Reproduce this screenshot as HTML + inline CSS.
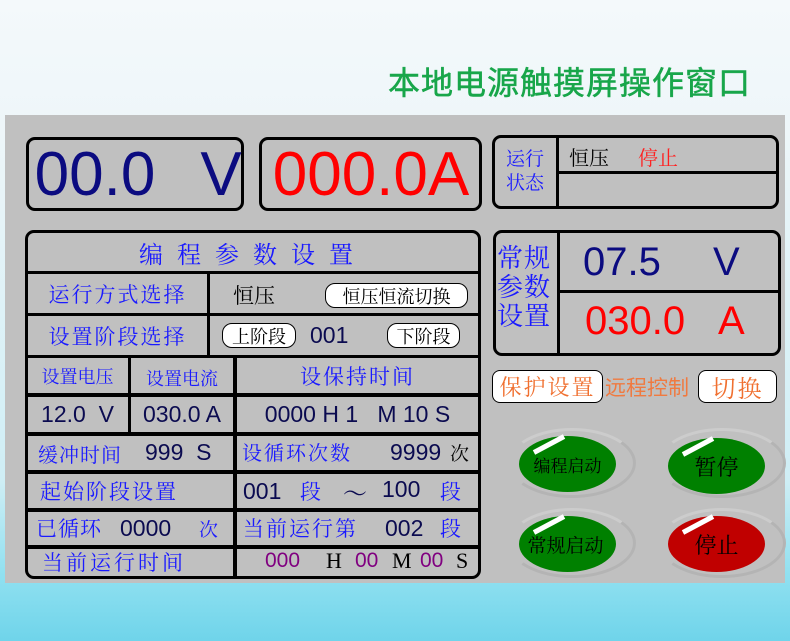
<!DOCTYPE html>
<html><head><meta charset="utf-8"><style>
*{margin:0;padding:0;box-sizing:border-box}
body{width:790px;height:641px;overflow:hidden;position:relative;font-family:"Liberation Sans","Noto Sans CJK SC",sans-serif;
background:linear-gradient(180deg,#f4f9fb 0%,#eef6f9 20%,#cfeef5 75%,#8fe0f0 90%,#6fd4ea 100%)}
.a{position:absolute}
.panel{left:5px;top:115px;width:780px;height:468px;background:#c0c0c0}
.box{position:absolute;border:3px solid #000;border-radius:9px}
.c{position:absolute;display:flex;align-items:center;justify-content:center;white-space:nowrap}
.s{font-family:"Liberation Serif","Noto Serif CJK SC",serif}
.blue{color:#1a1aff}
.ln{position:absolute;background:#000}
.btn{position:absolute;background:#fff;border:1px solid #000;border-radius:8px;display:flex;align-items:center;justify-content:center;white-space:nowrap}
.rb{position:absolute;border-radius:50%}
</style></head><body>
<div class="a" style="left:388px;top:58px;font-size:32px;color:#18a64a;font-family:'Noto Sans CJK SC',sans-serif;letter-spacing:1px;-webkit-text-stroke:0.5px #18a64a">本地电源触摸屏操作窗口</div>
<div class="a panel"></div>

<div class="box" style="left:26px;top:137px;width:218px;height:74px"></div>
<div class="c" style="left:30px;top:137px;width:130px;height:74px;font-size:62px;color:#0b0b80">00.0</div>
<div class="c" style="left:196px;top:137px;width:50px;height:74px;font-size:62px;color:#0b0b80">V</div>
<div class="box" style="left:259px;top:137px;width:223px;height:74px"></div>
<div class="c" style="left:262px;top:137px;width:218px;height:74px;font-size:62px;color:#ff0000">000.0A</div>

<div class="box" style="left:492px;top:135px;width:287px;height:74px"></div>
<div class="ln" style="left:556px;top:137px;width:3px;height:70px"></div>
<div class="ln" style="left:558px;top:171px;width:219px;height:3px"></div>
<div class="c s blue" style="left:495px;top:140px;width:60px;height:64px;font-size:19px;line-height:24px;white-space:normal;text-align:center">运行<br>状态</div>
<div class="a s" style="left:569px;top:142px;font-size:20px;color:#000">恒压</div>
<div class="a s" style="left:638px;top:142px;font-size:20px;color:#ff2020">停止</div>

<div class="box" style="left:493px;top:230px;width:288px;height:126px"></div>
<div class="ln" style="left:557px;top:232px;width:3px;height:122px"></div>
<div class="ln" style="left:559px;top:290px;width:220px;height:3px"></div>
<div class="a s blue" style="left:497px;top:244px;font-size:26px;line-height:29px;width:60px;letter-spacing:1px">常规参数设置</div>
<div class="a" style="left:583px;top:240px;font-size:40px;color:#0b0b80">07.5</div>
<div class="a" style="left:713px;top:240px;font-size:40px;color:#0b0b80">V</div>
<div class="a" style="left:585px;top:299px;font-size:40px;color:#ff0000">030.0</div>
<div class="a" style="left:718px;top:299px;font-size:40px;color:#ff0000">A</div>

<div class="btn s" style="left:492px;top:370px;width:111px;height:33px;font-size:22px;color:#f07030;letter-spacing:2px">保护设置</div>
<div class="a" style="left:605px;top:372px;font-size:21px;color:#f07a40;font-family:'Noto Sans CJK SC',sans-serif">远程控制</div>
<div class="btn s" style="left:698px;top:370px;width:79px;height:33px;font-size:24px;color:#f07030;letter-spacing:2px">切换</div>

<div class="rb" style="left:508px;top:428px;width:128px;height:70px;border:3px solid #b4b4b4;border-left-color:transparent;border-top-color:#ccc"></div>
<div class="rb" style="left:519px;top:436px;width:97px;height:56px;background:#008000"></div>
<div class="a" style="left:532px;top:442px;width:34px;height:5px;background:#fff;transform:rotate(-28deg)"></div>
<div class="c s" style="left:519px;top:436px;width:97px;height:56px;font-size:17px">编程启动</div>

<div class="rb" style="left:658px;top:428px;width:128px;height:70px;border:3px solid #b4b4b4;border-left-color:transparent;border-top-color:#ccc"></div>
<div class="rb" style="left:668px;top:438px;width:97px;height:56px;background:#008000"></div>
<div class="a" style="left:681px;top:444px;width:34px;height:5px;background:#fff;transform:rotate(-28deg)"></div>
<div class="c s" style="left:668px;top:438px;width:97px;height:56px;font-size:22px">暂停</div>

<div class="rb" style="left:508px;top:508px;width:128px;height:70px;border:3px solid #b4b4b4;border-left-color:transparent;border-top-color:#ccc"></div>
<div class="rb" style="left:519px;top:516px;width:97px;height:56px;background:#008000"></div>
<div class="a" style="left:532px;top:522px;width:34px;height:5px;background:#fff;transform:rotate(-28deg)"></div>
<div class="c s" style="left:517px;top:516px;width:97px;height:56px;font-size:19px">常规启动</div>

<div class="rb" style="left:658px;top:508px;width:128px;height:70px;border:3px solid #b4b4b4;border-left-color:transparent;border-top-color:#ccc"></div>
<div class="rb" style="left:668px;top:516px;width:97px;height:56px;background:#c00000"></div>
<div class="a" style="left:681px;top:522px;width:34px;height:5px;background:#fff;transform:rotate(-28deg)"></div>
<div class="c s" style="left:668px;top:516px;width:97px;height:56px;font-size:22px">停止</div>

<div class="box" style="left:25px;top:230px;width:456px;height:349px;border-width:3px"></div>
<div class="c s blue" style="left:28px;top:232px;width:450px;height:40px;font-size:24px;letter-spacing:14px">编程参数设置</div>
<div class="ln" style="left:27px;top:271px;width:452px;height:3px"></div>
<div class="ln" style="left:207px;top:273px;width:3px;height:42px"></div>
<div class="c s blue" style="left:28px;top:274px;width:179px;height:39px;font-size:21px;letter-spacing:2px">运行方式选择</div>
<div class="a s" style="left:233px;top:280px;font-size:21px">恒压</div>
<div class="btn s" style="left:325px;top:283px;width:143px;height:25px;border-radius:10px;font-size:18px">恒压恒流切换</div>
<div class="ln" style="left:27px;top:313px;width:452px;height:3px"></div>
<div class="ln" style="left:207px;top:315px;width:3px;height:42px"></div>
<div class="c s blue" style="left:28px;top:316px;width:179px;height:39px;font-size:21px;letter-spacing:2px">设置阶段选择</div>
<div class="btn s" style="left:222px;top:323px;width:74px;height:25px;border-radius:10px;font-size:18px">上阶段</div>
<div class="a" style="left:310px;top:322px;font-size:23px;color:#0b0b50">001</div>
<div class="btn s" style="left:387px;top:323px;width:73px;height:25px;border-radius:10px;font-size:18px">下阶段</div>
<div class="ln" style="left:27px;top:355px;width:452px;height:3px"></div>

<div class="ln" style="left:128px;top:357px;width:3px;height:77px"></div>
<div class="ln" style="left:233px;top:357px;width:4px;height:220px"></div>
<div class="ln" style="left:27px;top:393px;width:452px;height:4px"></div>
<div class="ln" style="left:27px;top:432px;width:452px;height:4px"></div>
<div class="ln" style="left:27px;top:470px;width:452px;height:4px"></div>
<div class="ln" style="left:27px;top:508px;width:452px;height:4px"></div>
<div class="ln" style="left:27px;top:545px;width:452px;height:4px"></div>

<div class="c s blue" style="left:27px;top:358px;width:101px;height:35px;font-size:18px">设置电压</div>
<div class="c s blue" style="left:131px;top:360px;width:102px;height:35px;font-size:18px">设置电流</div>
<div class="c s blue" style="left:237px;top:358px;width:241px;height:35px;font-size:21px;letter-spacing:2px">设保持时间</div>
<div class="c" style="left:27px;top:397px;width:101px;height:35px;font-size:23px;color:#0b0b50">12.0&nbsp;&nbsp;V</div>
<div class="c" style="left:131px;top:397px;width:102px;height:35px;font-size:23px;color:#0b0b50">030.0 A</div>
<div class="c" style="left:237px;top:397px;width:241px;height:35px;font-size:23px;color:#0b0b50">0000 H 1&nbsp;&nbsp;&nbsp;M 10 S</div>

<div class="a s blue" style="left:38px;top:439px;font-size:20px;letter-spacing:1px">缓冲时间</div>
<div class="a" style="left:145px;top:439px;font-size:23px;color:#0b0b50">999&nbsp;&nbsp;S</div>
<div class="a s blue" style="left:242px;top:437px;font-size:20px;letter-spacing:2px">设循环次数</div>
<div class="a" style="left:390px;top:439px;font-size:23px;color:#0b0b50">9999</div>
<div class="a s" style="left:450px;top:439px;font-size:19px">次</div>

<div class="a s blue" style="left:40px;top:476px;font-size:21px;letter-spacing:2px">起始阶段设置</div>
<div class="a" style="left:243px;top:478px;font-size:23px;color:#0b0b50">001</div>
<div class="a s blue" style="left:300px;top:476px;font-size:21px">段</div>
<div class="a s" style="left:343px;top:474px;font-size:24px;color:#0b0b50">～</div>
<div class="a" style="left:382px;top:476px;font-size:23px;color:#0b0b50">100</div>
<div class="a s blue" style="left:440px;top:476px;font-size:21px">段</div>

<div class="a s blue" style="left:36px;top:513px;font-size:21px;letter-spacing:1px">已循环</div>
<div class="a" style="left:120px;top:515px;font-size:23px;color:#0b0b50">0000</div>
<div class="a s blue" style="left:199px;top:515px;font-size:19px">次</div>
<div class="a s blue" style="left:243px;top:513px;font-size:21px;letter-spacing:2px">当前运行第</div>
<div class="a" style="left:385px;top:515px;font-size:23px;color:#0b0b50">002</div>
<div class="a s blue" style="left:440px;top:513px;font-size:21px">段</div>

<div class="a s blue" style="left:42px;top:547px;font-size:21px;letter-spacing:3px">当前运行时间</div>
<div class="a" style="left:265px;top:549px;font-size:21px;color:#800080">000</div>
<div class="a s" style="left:326px;top:548px;font-size:22px">H</div>
<div class="a" style="left:355px;top:549px;font-size:21px;color:#800080">00</div>
<div class="a s" style="left:392px;top:548px;font-size:22px">M</div>
<div class="a" style="left:420px;top:549px;font-size:21px;color:#800080">00</div>
<div class="a s" style="left:456px;top:548px;font-size:22px">S</div>
</body></html>
